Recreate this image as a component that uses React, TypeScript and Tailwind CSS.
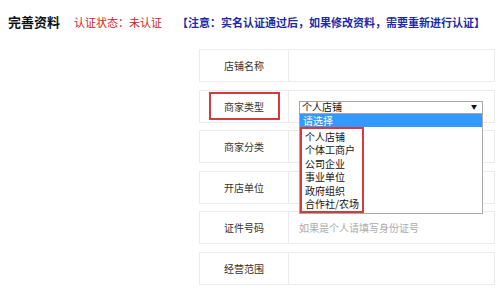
import type { FC, ReactNode } from "react";

const font = { fontFamily: '"Noto Sans CJK SC", "Noto Sans", sans-serif' };

type RowProps = {
    label: ReactNode;
    children?: ReactNode;
    className?: string;
};

const Row: FC<RowProps> = ({ label, children, className }) => {
    return (
        <div className={`flex h-[33px] border border-[#ebebeb] bg-white ${className ?? ""}`}>
            <div className="w-[89px] shrink-0 border-r border-[#ebebeb] flex items-center justify-center text-[10px] text-[#333]">
                {label}
            </div>
            <div className="flex-1 flex items-center pl-[10px] text-[10px]">{children}</div>
        </div>
    );
};

const options = ["个人店铺", "个体工商户", "公司企业", "事业单位", "政府组织", "合作社/农场"];

const App: FC = () => {
    return (
        <div className="w-[500px] h-[288px] bg-white overflow-hidden" style={font}>
            <div className="flex items-center h-[16px] mt-[14px] pl-[8px] whitespace-nowrap">
                <span className="text-[13px] font-bold text-[#111]">完善资料</span>
                <span className="ml-[14px] text-[11px] text-[#d42222]">认证状态：未认证</span>
                <span className="ml-[15px] text-[11px] font-semibold text-[#1b2aa6]">
                    【注意：实名认证通过后，如果修改资料，需要重新进行认证】
                </span>
            </div>

            <div className="ml-[199px] w-[296px] mt-[19px] flex flex-col gap-[7.5px]">
                <Row label="店铺名称" />
                <div className="relative z-10 flex h-[33px] border border-[#ebebeb] bg-white">
                    <div className="w-[89px] shrink-0 border-r border-[#ebebeb] flex items-center justify-center">
                        <div className="w-[71px] h-[28px] border-2 border-[#d63a3a] flex items-center justify-center text-[10px] text-[#333]">
                            商家类型
                        </div>
                    </div>
                    <div className="flex-1 pl-[10px] pt-[10px]">
                        <div className="relative w-[184px]">
                            <div className="h-[13px] border border-[#a8a8a8] bg-white flex items-center justify-between pl-[2px] pr-[5px] text-[10px] leading-none text-[#111]">
                                <span>个人店铺</span>
                                <span className="text-[6px]">▼</span>
                            </div>
                            <div className="absolute left-0 top-full w-full bg-white border border-t-0 border-[#a8a8a8] pb-[0px]">
                                <div className="h-[13px] bg-[#3399ff] text-white text-[10px] leading-[13px] pl-[3px]">请选择</div>
                                <div className="w-[64px] border-2 border-[#d63a3a] pl-[3px] pt-[1px] text-[10px] text-[#111]">
                                    {options.map((o) => (
                                        <div key={o} className="h-[13.5px] leading-[13.5px] whitespace-nowrap">{o}</div>
                                    ))}
                                </div>
                            </div>
                        </div>
                    </div>
                </div>
                <Row label="商家分类" />
                <Row label="开店单位" />
                <Row label="证件号码">
                    <span className="text-[#aaa]">如果是个人请填写身份证号</span>
                </Row>
                <Row label="经营范围" />
            </div>
        </div>
    );
};

export default App;
